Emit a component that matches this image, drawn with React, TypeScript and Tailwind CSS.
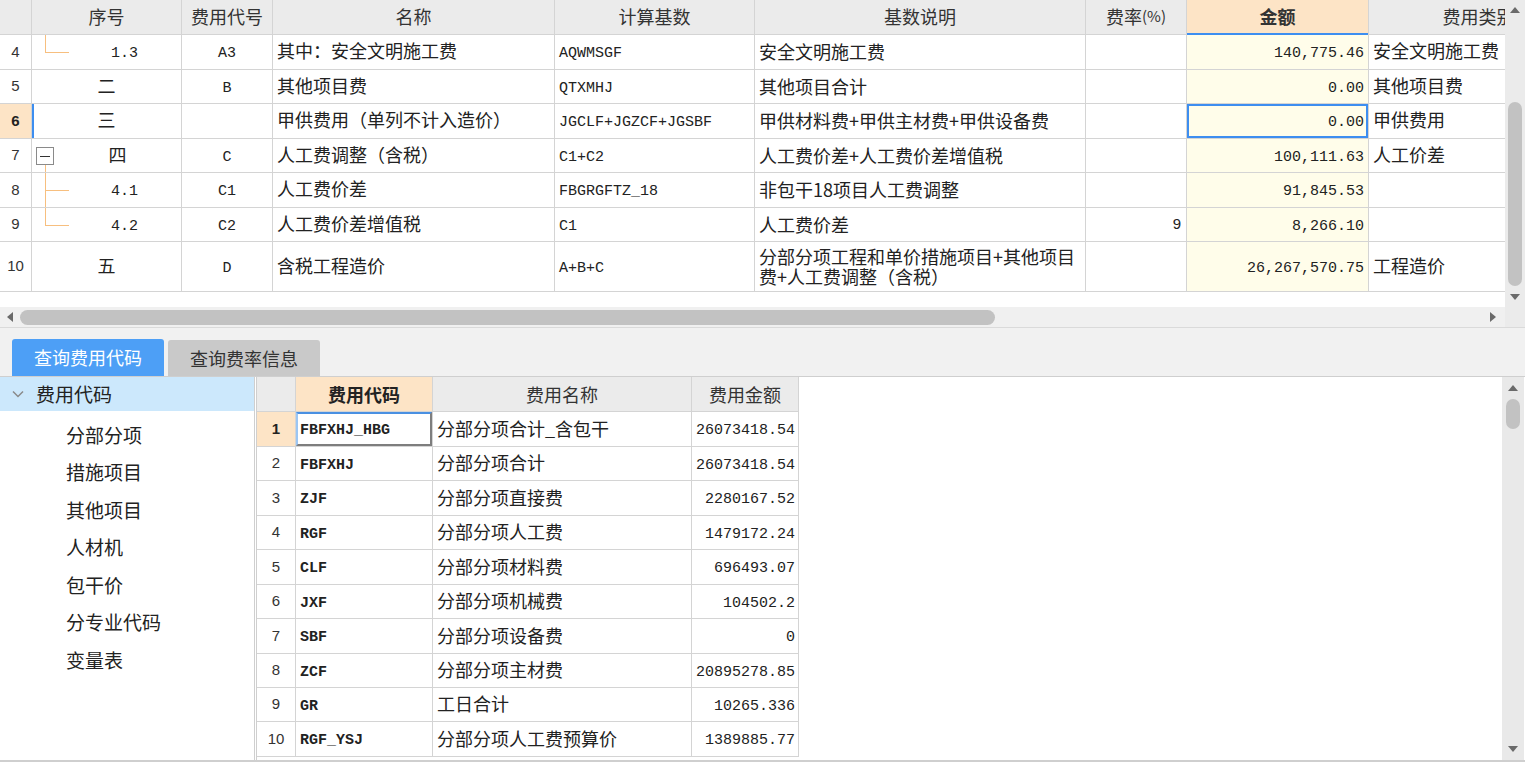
import React from "react";

const cjk = "font-['Noto_Sans_CJK_SC',sans-serif]";
const mono = "font-['Liberation_Mono',monospace]";
const sans = "font-['Liberation_Sans',sans-serif]";

type TopRow = {
  n: string;
  seq: string;
  seqMono?: boolean;
  tree?: "last" | "mid" | "box";
  code: string;
  name: string;
  base: string;
  desc: React.ReactNode;
  rate?: string;
  amt: string;
  cat?: string;
  h: string;
  sel?: boolean;
};

const topRows: TopRow[] = [
  { n: "4", seq: "1.3", seqMono: true, tree: "last", code: "A3", name: "其中：安全文明施工费", base: "AQWMSGF", desc: "安全文明施工费", amt: "140,775.46", cat: "安全文明施工费", h: "h-[35px]" },
  { n: "5", seq: "二", code: "B", name: "其他项目费", base: "QTXMHJ", desc: "其他项目合计", amt: "0.00", cat: "其他项目费", h: "h-[34px]" },
  { n: "6", seq: "三", code: "", name: "甲供费用（单列不计入造价）", base: "JGCLF+JGZCF+JGSBF", desc: "甲供材料费+甲供主材费+甲供设备费", amt: "0.00", cat: "甲供费用", h: "h-[35px]", sel: true },
  { n: "7", seq: "四", tree: "box", code: "C", name: "人工费调整（含税）", base: "C1+C2", desc: "人工费价差+人工费价差增值税", amt: "100,111.63", cat: "人工价差", h: "h-[34px]" },
  { n: "8", seq: "4.1", seqMono: true, tree: "mid", code: "C1", name: "人工费价差", base: "FBGRGFTZ_18", desc: "非包干18项目人工费调整", amt: "91,845.53", h: "h-[35px]" },
  { n: "9", seq: "4.2", seqMono: true, tree: "last", code: "C2", name: "人工费价差增值税", base: "C1", desc: "人工费价差", rate: "9", amt: "8,266.10", h: "h-[34px]" },
  {
    n: "10",
    seq: "五",
    code: "D",
    name: "含税工程造价",
    base: "A+B+C",
    desc: (
      <>
        分部分项工程和单价措施项目+其他项目
        <br />
        费+人工费调整（含税）
      </>
    ),
    amt: "26,267,570.75",
    cat: "工程造价",
    h: "h-[50px]",
  },
];

const bottomRows = [
  ["1", "FBFXHJ_HBG", "分部分项合计_含包干", "26073418.54", "h-[35px]"],
  ["2", "FBFXHJ", "分部分项合计", "26073418.54", "h-[34px]"],
  ["3", "ZJF", "分部分项直接费", "2280167.52", "h-[35px]"],
  ["4", "RGF", "分部分项人工费", "1479172.24", "h-[34px]"],
  ["5", "CLF", "分部分项材料费", "696493.07", "h-[35px]"],
  ["6", "JXF", "分部分项机械费", "104502.2", "h-[34px]"],
  ["7", "SBF", "分部分项设备费", "0", "h-[35px]"],
  ["8", "ZCF", "分部分项主材费", "20895278.85", "h-[34px]"],
  ["9", "GR", "工日合计", "10265.336", "h-[34px]"],
  ["10", "RGF_YSJ", "分部分项人工费预算价", "1389885.77", "h-[35px]"],
];

const treeItems = ["分部分项", "措施项目", "其他项目", "人材机", "包干价", "分专业代码", "变量表"];

function Tri({ dir, color = "#6a6a6a" }: { dir: "up" | "down" | "left" | "right"; color?: string }) {
  const pts =
    dir === "up" ? "0,6 5,0 10,6" : dir === "down" ? "0,0 10,0 5,6" : dir === "left" ? "6,0 6,10 0,5" : "0,0 0,10 6,5";
  const w = dir === "up" || dir === "down" ? 10 : 6;
  const h = dir === "up" || dir === "down" ? 6 : 10;
  return (
    <svg width={w} height={h} viewBox={`0 0 ${w} ${h}`}>
      <polygon points={pts} fill={color} />
    </svg>
  );
}

function TopTableRow({ r }: { r: TopRow }) {
  const cell = "shrink-0 border-r border-b border-[#d4d4d4] flex items-center";
  return (
    <div className={`flex ${r.h}`}>
      <div
        className={`${cell} w-[32px] justify-center ${sans} text-[15px] ${
          r.sel ? "bg-[#fde4c6] font-bold text-[#222]" : "bg-white text-[#333]"
        }`}
      >
        {r.n}
      </div>
      <div className={`${cell} w-[150px] relative bg-white`}>
        {r.sel && <div className="absolute left-0 top-0 bottom-0 w-[2px] bg-[#3d8ef0]" />}
        {(r.tree === "last" || r.tree === "mid") && (
          <>
            <div
              className={`absolute left-[13px] top-0 w-[1px] bg-[#f7bf7f] ${r.tree === "last" ? "h-1/2" : "bottom-0"}`}
            />
            <div className="absolute left-[13px] top-1/2 w-[24px] h-[1px] bg-[#f7bf7f]" />
          </>
        )}
        {r.tree === "box" && (
          <>
            <div className="absolute left-[4px] top-[8px] w-[18px] h-[18px] border border-[#8a8a8a] bg-white flex items-center justify-center">
              <div className="w-[10px] h-[1px] bg-[#333]" />
            </div>
            <div className="absolute left-[13px] top-[26px] bottom-0 w-[1px] bg-[#f7bf7f]" />
          </>
        )}
        {r.tree === "box" && <div className="w-[22px] shrink-0" />}
        {(r.tree === "last" || r.tree === "mid") && <div className="w-[36px] shrink-0" />}
        <div
          className={`flex-1 text-center text-[#222] ${
            r.seqMono ? `${mono} text-[15px] pt-[5px]` : `${cjk} text-[18px] pb-[3px]`
          }`}
        >
          {r.seq}
        </div>
      </div>
      <div className={`${cell} w-[91px] justify-center pt-[5px] ${mono} text-[15px] text-[#222] bg-white`}>{r.code}</div>
      <div
        className={`${cell} w-[282px] pl-[4px] pb-[3px] ${cjk} text-[18px] text-[#222] whitespace-nowrap overflow-hidden bg-white`}
      >
        {r.name}
      </div>
      <div className={`${cell} w-[200px] pl-[4px] pt-[5px] ${mono} text-[15px] text-[#222] bg-white`}>{r.base}</div>
      <div className={`${cell} w-[331px] pl-[4px] pb-[2px] ${cjk} text-[18px] leading-[20px] text-[#222] bg-white`}>
        <div>{r.desc}</div>
      </div>
      <div className={`${cell} w-[101px] justify-end pr-[5px] ${sans} text-[15px] text-[#222] bg-white`}>{r.rate}</div>
      <div
        className={`${cell} w-[182px] relative justify-end pr-[4px] pt-[5px] bg-[#fffdea] ${mono} text-[15px] text-[#222]`}
      >
        {r.sel && <div className="absolute inset-0 border-2 border-[#3d8ef0]" />}
        {r.amt}
      </div>
      <div className={`${cell} w-[220px] pl-[4px] pb-[3px] ${cjk} text-[18px] text-[#222] whitespace-nowrap bg-white`}>
        {r.cat}
      </div>
    </div>
  );
}

function TopHeader() {
  const cell = `shrink-0 border-r border-b border-[#d4d4d4] flex items-center justify-center pb-[1px] ${cjk} text-[18px] text-[#333]`;
  return (
    <div className="flex h-[35px] bg-[#ebebeb]">
      <div className={`${cell} w-[32px]`} />
      <div className={`${cell} w-[150px]`}>序号</div>
      <div className={`${cell} w-[91px]`}>费用代号</div>
      <div className={`${cell} w-[282px]`}>名称</div>
      <div className={`${cell} w-[200px]`}>计算基数</div>
      <div className={`${cell} w-[331px]`}>基数说明</div>
      <div className={`${cell} w-[101px]`}>
        费率<span className="text-[15px]">(%)</span>
      </div>
      <div className={`${cell} w-[182px] relative bg-[#fde4c6] font-bold text-[#222]`}>
        金额
        <div className="absolute left-0 right-0 bottom-[-1px] h-[2px] bg-[#3d8ef0]" />
      </div>
      <div className={`${cell} w-[220px]`}>费用类别</div>
    </div>
  );
}

export default function App() {
  const bcell = "shrink-0 border-r border-b border-[#d4d4d4] flex items-center";
  return (
    <div className="w-[1525px] h-[762px] overflow-hidden bg-white flex flex-col">
      {/* Top grid */}
      <div className="flex h-[307px] shrink-0">
        <div className="w-[1505px] h-full overflow-hidden bg-white">
          <div className="w-[1589px]">
            <TopHeader />
            {topRows.map((r) => (
              <TopTableRow key={r.n} r={r} />
            ))}
          </div>
        </div>
        <div className="w-[20px] h-full bg-[#ebebeb] flex flex-col items-center">
          <div className="h-[20px] flex items-center justify-center">
            <Tri dir="up" />
          </div>
          <div className="h-[82px]" />
          <div className="w-[14px] h-[184px] rounded-full bg-[#c2c2c2]" />
          <div className="flex-1 flex items-center justify-center">
            <Tri dir="down" />
          </div>
        </div>
      </div>
      {/* Horizontal scrollbar */}
      <div className="h-[21px] shrink-0 bg-[#f0f0f0] flex items-center border-b border-[#dadada]">
        <div className="w-[20px] flex items-center justify-center">
          <Tri dir="left" />
        </div>
        <div className="w-[975px] h-[15px] rounded-full bg-[#c2c2c2]" />
        <div className="flex-1" />
        <div className="w-[24px] flex items-center justify-center">
          <Tri dir="right" />
        </div>
        <div className="w-[20px] h-full bg-[#ebebeb]" />
      </div>
      {/* Tabs */}
      <div className="h-[48px] shrink-0 bg-[#f1f1f1] flex items-end pl-[12px] gap-[4px]">
        <div
          className={`w-[152px] h-[37px] rounded-t-[3px] bg-[#4d9ff6] text-white ${cjk} text-[18px] flex items-center justify-center`}
        >
          查询费用代码
        </div>
        <div
          className={`w-[152px] h-[36px] rounded-t-[3px] bg-[#c9c9c9] text-[#333] ${cjk} text-[18px] flex items-center justify-center`}
        >
          查询费率信息
        </div>
      </div>
      {/* Bottom panel */}
      <div className="flex-1 flex border-t border-b-2 border-[#cfcfcf] bg-white">
        <div className="w-[255px] shrink-0 border-r border-[#cfcfcf]">
          <div className={`h-[34px] bg-[#cce8fc] flex items-center ${cjk} text-[19px] text-[#222]`}>
            <div className="w-[36px] flex items-center justify-center">
              <svg width="12" height="8" viewBox="0 0 12 8">
                <polyline points="1,1.5 6,6.5 11,1.5" fill="none" stroke="#8a8a8a" strokeWidth="1.5" />
              </svg>
            </div>
            费用代码
          </div>
          <div className="pt-[5px]">
            {treeItems.map((t) => (
              <div key={t} className={`h-[37.5px] flex items-center pl-[66px] ${cjk} text-[19px] text-[#222]`}>
                {t}
              </div>
            ))}
          </div>
        </div>
        <div className="ml-[1px] flex-1 flex border-l border-[#cfcfcf]">
          <div className="w-[542px] shrink-0">
            <div className={`flex h-[35px] bg-[#ebebeb] ${cjk} text-[18px] text-[#333]`}>
              <div className={`${bcell} w-[39px]`} />
              <div className={`${bcell} w-[137px] justify-center bg-[#fde4c6] font-bold text-[#222]`}>费用代码</div>
              <div className={`${bcell} w-[259px] justify-center`}>费用名称</div>
              <div className={`${bcell} w-[107px] justify-center`}>费用金额</div>
            </div>
            {bottomRows.map(([n, code, name, amt, h], i) => (
              <div key={n} className={`flex ${h}`}>
                <div
                  className={`${bcell} w-[39px] justify-center ${sans} text-[15px] ${
                    i === 0 ? "bg-[#fde4c6] font-bold text-[#222]" : "text-[#333]"
                  }`}
                >
                  {n}
                </div>
                <div
                  className={`${bcell} w-[137px] relative pl-[4px] pt-[5px] ${mono} font-bold text-[15px] text-[#222]`}
                >
                  {i === 0 && (
                    <div className="absolute inset-0 border-t-2 border-l-2 border-r-2 border-b-2 border-t-[#4a90e2] border-l-[#9cc6f3] border-r-[#7e7e7e] border-b-[#7e7e7e]" />
                  )}
                  {code}
                </div>
                <div className={`${bcell} w-[259px] pl-[4px] pb-[2px] ${cjk} text-[18px] text-[#222] whitespace-nowrap`}>
                  {name}
                </div>
                <div className={`${bcell} w-[107px] justify-end pr-[3px] pt-[5px] ${mono} text-[15px] text-[#222]`}>
                  {amt}
                </div>
              </div>
            ))}
          </div>
          <div className="flex-1" />
          <div className="w-[22px] mr-[1px] bg-[#e9e9e9] flex flex-col items-center">
            <div className="h-[22px] flex items-center justify-center">
              <Tri dir="up" />
            </div>
            <div className="w-[14px] h-[30px] rounded-full bg-[#c2c2c2]" />
            <div className="flex-1" />
            <div className="h-[22px] flex items-center justify-center">
              <Tri dir="down" />
            </div>
          </div>
        </div>
      </div>
    </div>
  );
}
